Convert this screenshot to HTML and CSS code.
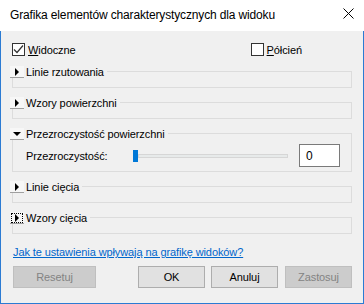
FILE: index.html
```html
<!DOCTYPE html>
<html lang="pl">
<head>
    <meta charset="UTF-8">
    <title>Grafika elementów</title>
    <link rel="stylesheet" href="styles.css">
</head>
<body>
<!--okno dialogowe-->
<div class="window">
    <!--pasek tytułu-->
    <div class="titlebar">
        <span class="title">Grafika elementów charakterystycznych dla widoku</span>
        <svg class="close" width="11" height="11" viewBox="0 0 11 11">
            <path d="M0.5 0.5 L10.5 10.5 M10.5 0.5 L0.5 10.5" stroke="#000" stroke-width="1" fill="none"/>
        </svg>
    </div>

    <div class="content">
        <!--pola wyboru-->
        <div class="checks">
            <div class="check">
                <span class="box">
                    <svg width="11" height="11" viewBox="0 0 11 11">
                        <path d="M1 5.5 L4 8.5 L10 1.5" stroke="#333" stroke-width="1.2" fill="none"/>
                    </svg>
                </span>
                <span><u>W</u>idoczne</span>
            </div>
            <div class="check half">
                <span class="box"></span>
                <span><u>P</u>ółcień</span>
            </div>
        </div>

        <!--grupa-->
        <div class="group">
            <div class="group_head">
                <span class="expander"><span class="tri_right"></span></span>
                <span class="group_title">Linie rzutowania</span>
                <span class="group_line"></span>
            </div>
            <div class="group_body"></div>
        </div>

        <div class="group">
            <div class="group_head">
                <span class="expander"><span class="tri_right"></span></span>
                <span class="group_title">Wzory powierzchni</span>
                <span class="group_line"></span>
            </div>
            <div class="group_body"></div>
        </div>

        <div class="group">
            <div class="group_head">
                <span class="expander"><span class="tri_down"></span></span>
                <span class="group_title">Przezroczystość powierzchni</span>
                <span class="group_line"></span>
            </div>
            <div class="group_body body_open">
                <span class="field_label">Przezroczystość:</span>
                <div class="slider">
                    <span class="thumb"></span>
                    <span class="track"></span>
                </div>
                <div class="num_input">0</div>
            </div>
        </div>

        <div class="group">
            <div class="group_head">
                <span class="expander"><span class="tri_right"></span></span>
                <span class="group_title">Linie cięcia</span>
                <span class="group_line"></span>
            </div>
            <div class="group_body"></div>
        </div>

        <div class="group">
            <div class="group_head">
                <span class="expander focused"><span class="tri_right"></span></span>
                <span class="group_title">Wzory cięcia</span>
                <span class="group_line"></span>
            </div>
            <div class="group_body"></div>
        </div>

        <!--link pomocy-->
        <a class="help" href="#">Jak te ustawienia wpływają na grafikę widoków?</a>

        <!--przyciski-->
        <div class="buttons">
            <span class="btn btn_reset disabled">Resetuj</span>
            <span class="btn btn_ok">OK</span>
            <span class="btn btn_cancel">Anuluj</span>
            <span class="btn btn_apply disabled">Zastosuj</span>
        </div>
    </div>
</div>
</body>
</html>
```

FILE: styles.css
```css
*{
    margin: 0;
    padding: 0;
    box-sizing: border-box;
}
body
{
    font-family: "Liberation Sans", Arial, sans-serif;
    font-size: 11px;
    letter-spacing: -0.1px;
    color: #000;
    background: #fff;
}
.window
{
    width: 364px;
    height: 304px;
    display: flex;
    flex-direction: column;
}
.titlebar
{
    height: 31px;
    background: #fff;
    display: flex;
    align-items: center;
    padding-left: 9px;
    padding-right: 10px;
    border-left: 1px solid #fff;
}
.title
{
    font-size: 12px;
    letter-spacing: -0.15px;
    flex: 1;
    margin-top: -2px;
}
.close
{
    margin-top: -5px;
}
.content
{
    flex: 1;
    background: #f0f0f0;
    border: 1px solid #2b7bd3;
    border-top: none;
    padding: 12px 11px 0 9px;
    display: flex;
    flex-direction: column;
}
.checks
{
    display: flex;
    height: 13px;
    padding-left: 2px;
    margin-bottom: 10px;
}
.check
{
    display: flex;
    align-items: center;
    gap: 3px;
}
.check.half
{
    margin-left: auto;
    margin-right: 50px;
}
.box
{
    width: 13px;
    height: 13px;
    border: 1px solid #333;
    background: #fff;
    display: flex;
    align-items: center;
    justify-content: center;
}

/*grupy*/
.group
{
    margin-bottom: 9px;
}
.group_head
{
    height: 12px;
    display: flex;
    align-items: center;
}
.expander
{
    width: 14px;
    height: 12px;
    background: #f7f7f7;
    border-bottom: 1px solid #a0a0a0;
    display: flex;
    align-items: center;
    justify-content: center;
}
.expander.focused
{
    outline: 1px dotted #000;
    outline-offset: -2px;
}
.tri_right
{
    width: 0;
    height: 0;
    border-top: 4px solid transparent;
    border-bottom: 4px solid transparent;
    border-left: 4px solid #000;
}
.tri_down
{
    width: 0;
    height: 0;
    border-left: 4px solid transparent;
    border-right: 4px solid transparent;
    border-top: 4px solid #000;
}
.group_title
{
    margin-left: 2px;
    margin-right: 3px;
    white-space: nowrap;
}
.group_line
{
    flex: 1;
    align-self: flex-end;
    height: 7px;
    border-top: 1px solid #dcdcdc;
    border-right: 1px solid #dcdcdc;
}
.group_body
{
    margin-left: 2px;
    height: 10px;
    border: 1px solid #dcdcdc;
    border-top: none;
}
.body_open
{
    height: 32px;
    display: flex;
    align-items: center;
    padding-left: 13px;
    padding-right: 11px;
}
.field_label
{
    width: 107px;
}
.slider
{
    width: 155px;
    height: 12px;
    display: flex;
    align-items: center;
}
.thumb
{
    width: 5px;
    height: 12px;
    background: #0078d7;
}
.track
{
    flex: 1;
    height: 4px;
    background: #e7eaea;
    border: 1px solid #d6d6d6;
}
.num_input
{
    margin-left: auto;
    width: 41px;
    height: 23px;
    background: #fff;
    border: 1px solid #7a7a7a;
    padding: 4px 0 0 6px;
    font-size: 12px;
}

/*link*/
.help
{
    color: #0066cc;
    margin-left: 3px;
    margin-top: 3px;
    align-self: flex-start;
}

/*przyciski*/
.buttons
{
    display: flex;
    margin-top: 8px;
    padding-left: 3px;
}
.btn
{
    height: 22px;
    width: 67px;
    display: flex;
    align-items: center;
    justify-content: center;
    background: #e1e1e1;
    border: 1px solid #adadad;
}
.btn.disabled
{
    background: #cccccc;
    border-color: #bfbfbf;
    color: #838383;
}
.btn_reset
{
    width: 83px;
}
.btn_ok
{
    margin-left: auto;
}
.btn_cancel
{
    margin-left: 6px;
}
.btn_apply
{
    margin-left: 7px;
}
```
